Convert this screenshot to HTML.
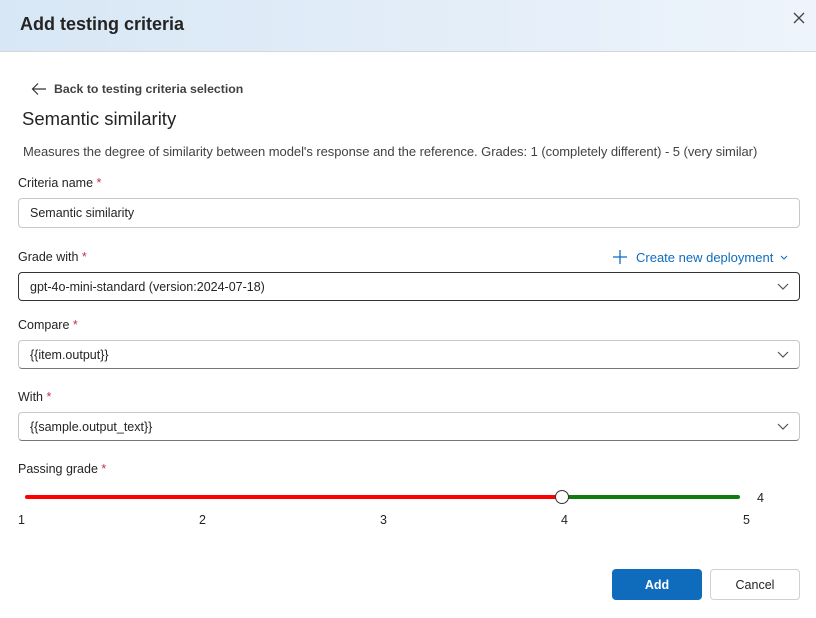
<!DOCTYPE html>
<html><head><style>
*{box-sizing:border-box;margin:0;padding:0}
body{width:816px;height:618px;background:#fff;font-family:"Segoe UI","Liberation Sans",sans-serif;color:#242424;position:relative;overflow:hidden;font-size:12.5px}
.a{position:absolute;white-space:nowrap}
.hdr{position:absolute;left:0;top:0;width:816px;height:52px;background:linear-gradient(90deg,#d8e7f5,#e4eef9 60%,#eef4fb);border-bottom:1px solid #d6d6d6}
.lbl{font-size:12.5px;color:#242424}
.lbl b{color:#c4314b;font-weight:normal}
.box{position:absolute;left:18px;width:782px;border:1px solid #c8c8c8;border-radius:4px;font-size:12.5px;padding-left:11px;display:flex;align-items:center}
.chev{position:absolute;right:10px;top:50%;margin-top:-4px}
</style></head><body>
<div class="hdr"></div>
<div class="a" style="left:20px;top:14px;font-size:18px;font-weight:600;color:#242424">Add testing criteria</div>
<svg class="a" style="left:792px;top:11px" width="14" height="14"><path d="M2 2L12 12M12 2L2 12" stroke="#444" stroke-width="1.3"/></svg>
<svg class="a" style="left:31px;top:82px" width="16" height="14"><path d="M15 7H2M7 1.5L1.5 7L7 12.5" stroke="#333" stroke-width="1.2" fill="none"/></svg>
<div class="a" style="left:54px;top:82px;font-size:12.3px;font-weight:600;color:#424242">Back to testing criteria selection</div>
<div class="a" style="left:22px;top:108px;font-size:18.5px">Semantic similarity</div>
<div class="a" style="left:23px;top:144px;font-size:13px;color:#424242;letter-spacing:-0.05px">Measures the degree of similarity between model's response and the reference. Grades: 1 (completely different) - 5 (very similar)</div>
<div class="a lbl" style="left:18px;top:176px">Criteria name <b>*</b></div>
<div class="box" style="top:198px;height:30px">Semantic similarity</div>
<div class="a lbl" style="left:18px;top:250px">Grade with <b>*</b></div>
<svg class="a" style="left:612px;top:249px" width="16" height="16"><path d="M8 1V15M1 8H15" stroke="#0f6cbd" stroke-width="1.3"/></svg>
<div class="a" style="left:636px;top:250px;color:#0f6cbd;font-size:13px">Create new deployment</div>
<svg class="a" style="left:780px;top:255px" width="8" height="6"><path d="M1 1L4 4L7 1" stroke="#0f6cbd" fill="none"/></svg>
<div class="box" style="top:272px;height:29px;border-color:#333">gpt-4o-mini-standard (version:2024-07-18)<svg class="chev" width="12" height="8"><path d="M1 1L6 6L11 1" stroke="#555" fill="none" stroke-width="1.2"/></svg></div>
<div class="a lbl" style="left:18px;top:318px">Compare <b>*</b></div>
<div class="box" style="top:340px;height:29px;border-bottom-color:#777">{{item.output}}<svg class="chev" width="12" height="8"><path d="M1 1L6 6L11 1" stroke="#555" fill="none" stroke-width="1.2"/></svg></div>
<div class="a lbl" style="left:18px;top:390px">With <b>*</b></div>
<div class="box" style="top:412px;height:29px;border-bottom-color:#777">{{sample.output_text}}<svg class="chev" width="12" height="8"><path d="M1 1L6 6L11 1" stroke="#555" fill="none" stroke-width="1.2"/></svg></div>
<div class="a lbl" style="left:18px;top:462px">Passing grade <b>*</b></div>
<div class="a" style="left:25px;top:495px;width:537px;height:4px;background:#f00;border-radius:2px"></div>
<div class="a" style="left:562px;top:495px;width:178px;height:4px;background:#107c10;border-radius:2px"></div>
<div class="a" style="left:555px;top:490px;width:14px;height:14px;border:1px solid #333;border-radius:50%;background:#fff"></div>
<div class="a" style="left:757px;top:491px">4</div>
<div class="a" style="left:18px;top:513px">1</div>
<div class="a" style="left:199px;top:513px">2</div>
<div class="a" style="left:380px;top:513px">3</div>
<div class="a" style="left:561px;top:513px">4</div>
<div class="a" style="left:743px;top:513px">5</div>
<div class="a" style="left:612px;top:569px;width:90px;height:31px;background:#0f6cbd;border-radius:4px;color:#fff;font-weight:600;display:flex;align-items:center;justify-content:center">Add</div>
<div class="a" style="left:710px;top:569px;width:90px;height:31px;border:1px solid #d1d1d1;border-radius:4px;display:flex;align-items:center;justify-content:center">Cancel</div>
</body></html>
